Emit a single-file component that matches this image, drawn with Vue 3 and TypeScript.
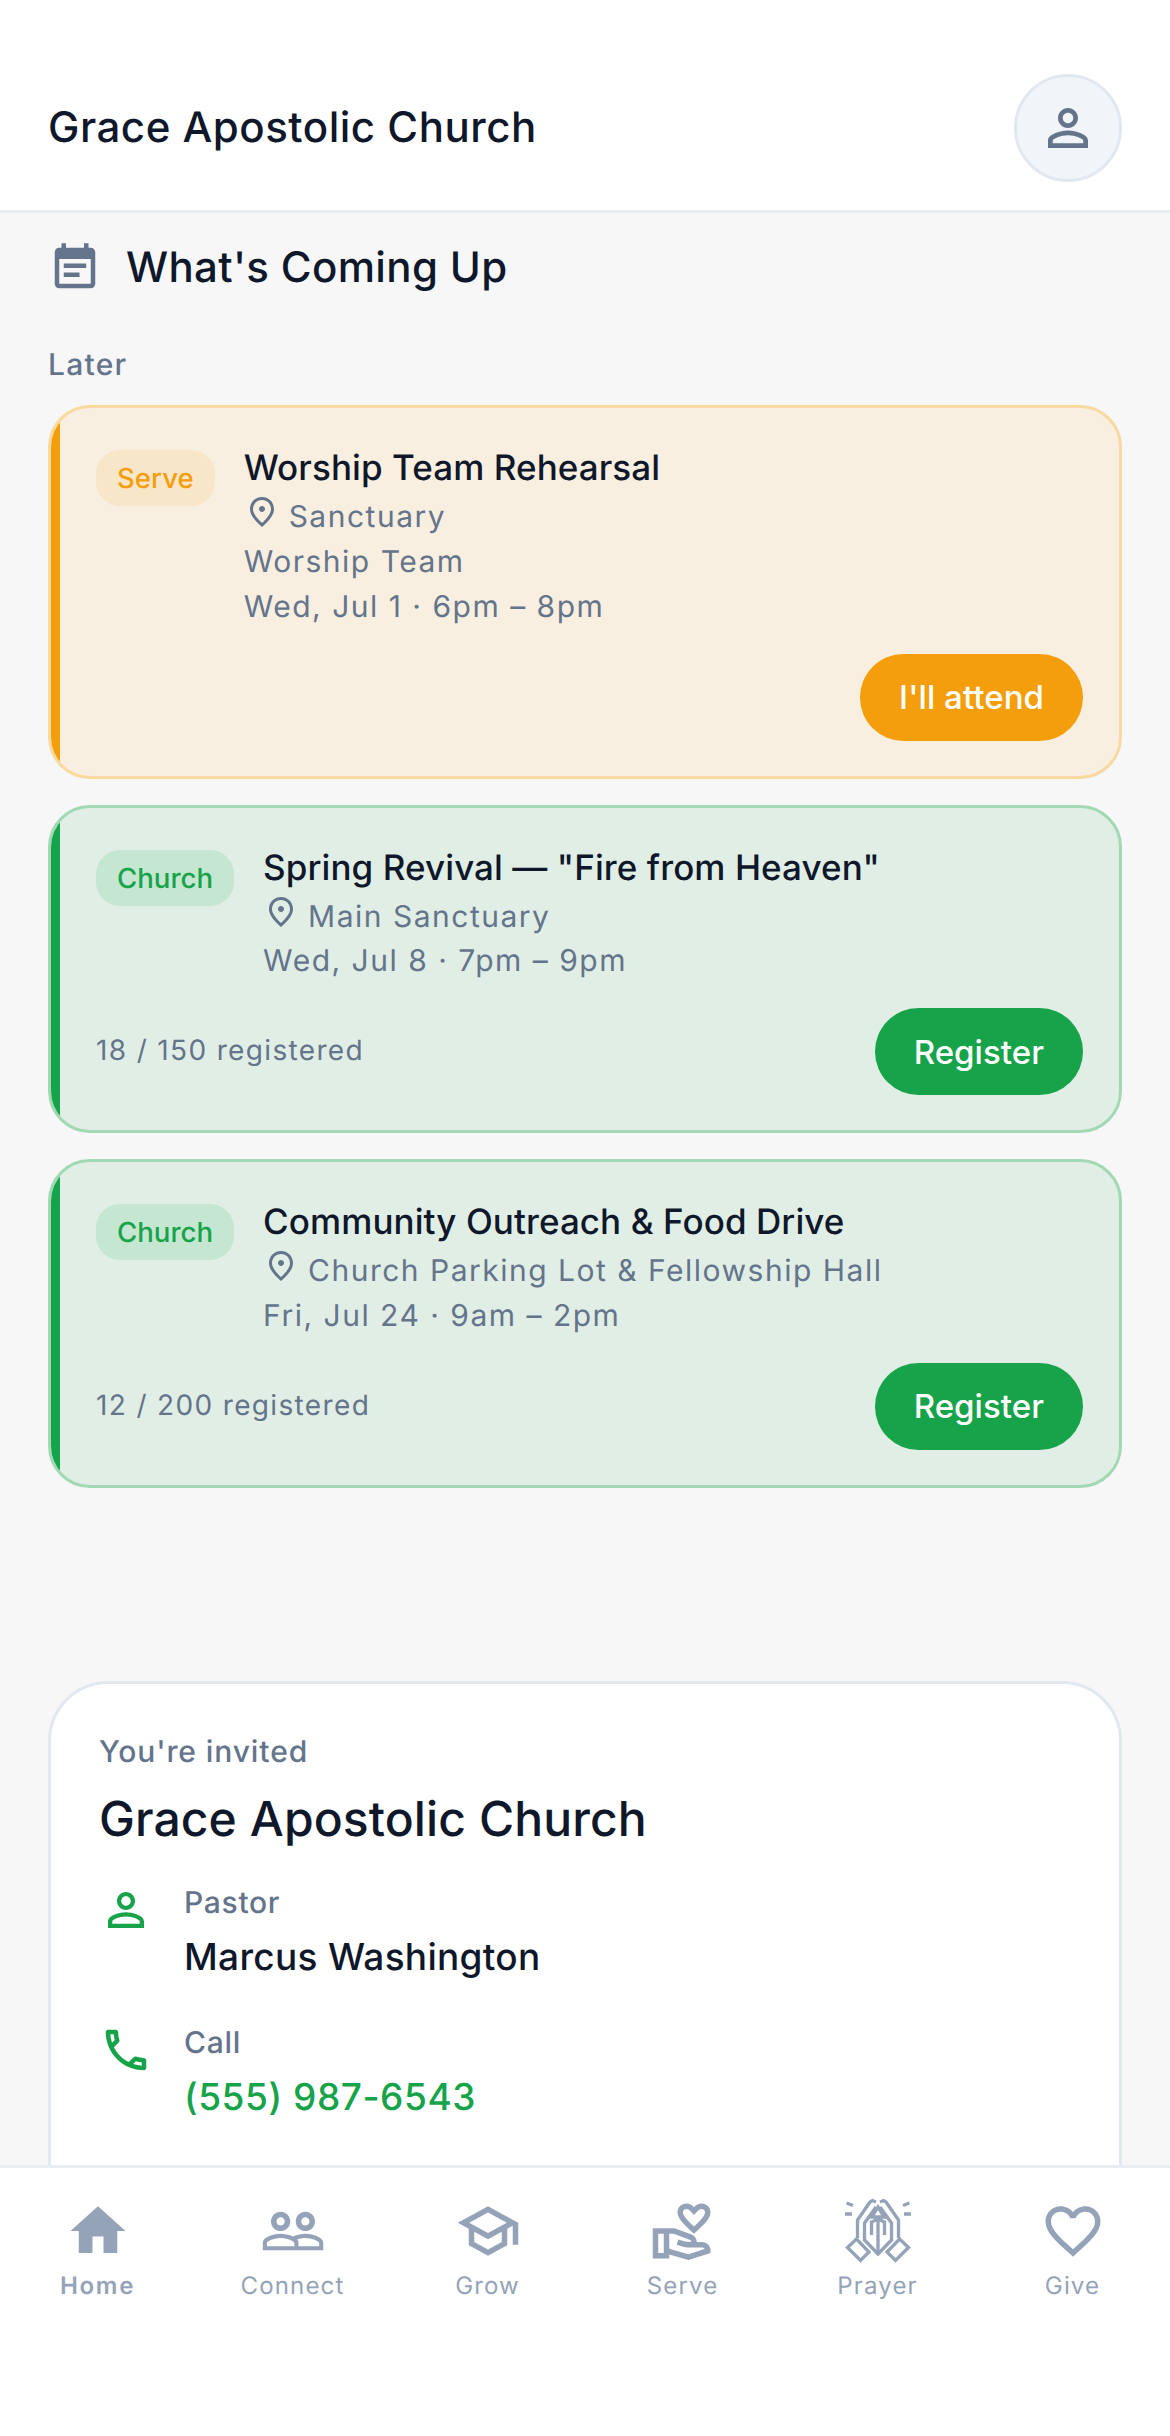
<script setup lang="ts">
interface EventItem {
  tone: string
  badge: string
  title: string
  place: string
  team?: string
  when: string
  count?: string
  action: string
}

const events: EventItem[] = [
  { tone: 'amber', badge: 'Serve', title: 'Worship Team Rehearsal', place: 'Sanctuary', team: 'Worship Team', when: 'Wed, Jul 1 · 6pm – 8pm', action: "I'll attend" },
  { tone: 'green', badge: 'Church', title: 'Spring Revival — "Fire from Heaven"', place: 'Main Sanctuary', when: 'Wed, Jul 8 · 7pm – 9pm', count: '18 / 150 registered', action: 'Register' },
  { tone: 'green', badge: 'Church', title: 'Community Outreach & Food Drive', place: 'Church Parking Lot & Fellowship Hall', when: 'Fri, Jul 24 · 9am – 2pm', count: '12 / 200 registered', action: 'Register' },
]

const person = 'M12 5.9c1.16 0 2.1.94 2.1 2.1s-.94 2.1-2.1 2.1S9.9 9.16 9.9 8s.94-2.1 2.1-2.1m0 9c2.97 0 6.1 1.46 6.1 2.1v1.1H5.9V17c0-.64 3.13-2.1 6.1-2.1M12 4C9.79 4 8 5.79 8 8s1.79 4 4 4 4-1.79 4-4-1.79-4-4-4zm0 9c-2.67 0-8 1.34-8 4v3h16v-3c0-2.66-5.33-4-8-4z'

const nav = [
  { label: 'Home', active: true, d: 'M10 20v-6h4v6h5v-8h3L12 3 2 12h3v8z' },
  { label: 'Connect', d: 'M16.5 13c-1.2 0-3.07.34-4.5 1-1.43-.67-3.3-1-4.5-1C5.33 13 1 14.08 1 16.25V19h22v-2.75c0-2.17-4.33-3.25-6.5-3.25zm-4 4.5h-10v-1.25c0-.54 2.56-1.75 5-1.75s5 1.21 5 1.75v1.25zm9 0H14v-1.25c0-.46-.2-.86-.52-1.22.88-.3 1.96-.53 3.02-.53 2.44 0 5 1.21 5 1.75v1.25zM7.5 12c1.93 0 3.5-1.57 3.5-3.5S9.43 5 7.5 5 4 6.57 4 8.5 5.57 12 7.5 12zm0-5c.83 0 1.5.67 1.5 1.5S8.33 10 7.5 10 6 9.33 6 8.5 6.67 7 7.5 7zm9 5c1.93 0 3.5-1.57 3.5-3.5S18.43 5 16.5 5 13 6.57 13 8.5s1.57 3.5 3.5 3.5zm0-5c.83 0 1.5.67 1.5 1.5s-.67 1.5-1.5 1.5-1.5-.67-1.5-1.5.67-1.5 1.5-1.5z' },
  { label: 'Grow', d: 'M12 3L1 9l4 2.18v6L12 21l7-3.82v-6l2-1.09V17h2V9L12 3zm6.82 6L12 12.72 5.18 9 12 5.28 18.82 9zM17 15.99l-5 2.73-5-2.73v-3.72L12 15l5-2.73v3.72z' },
  { label: 'Serve', d: 'M16 13c3.09-2.81 6-5.45 6-7.75C22 3.37 20.52 2 18.75 2c-1 0-1.96.46-2.75 1.34C15.21 2.46 14.25 2 13.25 2 11.48 2 10 3.37 10 5.25c0 2.3 2.91 4.94 6 7.75zm-2.75-9c.44 0 .97.27 1.23.57L16 6.19l1.52-1.62c.26-.3.79-.57 1.23-.57.72 0 1.25.52 1.25 1.25 0 1.31-2.14 3.37-4 5.08-1.86-1.71-4-3.77-4-5.08 0-.73.53-1.25 1.25-1.25zM19 16h-2c0-1.2-.75-2.28-1.87-2.7L8.97 11H1v11h6v-1.44l7 1.94 8-2.5v-1c0-1.66-1.34-3-3-3zM3 20v-7h2v7H3zm10.97.41L7 18.48V13h1.61l5.82 2.17c.34.13.57.46.57.83 0 0-1.99-.05-2.3-.15l-2.38-.79-.63 1.9 2.38.79c.51.17 1.05.26 1.59.26H19c.39 0 .74.23.9.56l-5.93 1.85z' },
  { label: 'Prayer', d: '' },
  { label: 'Give', d: 'M16.5 3c-1.74 0-3.41.81-4.5 2.09C10.91 3.81 9.24 3 7.5 3 4.42 3 2 5.42 2 8.5c0 3.78 3.4 6.86 8.55 11.54L12 21.35l1.45-1.32C18.6 15.36 22 12.28 22 8.5 22 5.42 19.58 3 16.5 3zm-4.4 15.55l-.1.1-.1-.1C7.14 14.24 4 11.39 4 8.5 4 6.5 5.5 5 7.5 5c1.54 0 3.04.99 3.57 2.36h1.87C13.46 5.99 14.96 5 16.5 5c2 0 3.5 1.5 3.5 3.5 0 2.89-3.14 5.74-7.9 10.05z' },
]
</script>

<template>
  <div class="screen">
    <header class="topbar">
      <h1 class="brand">Grace Apostolic Church</h1>
      <button class="avatar" aria-label="Profile">
        <svg class="avatar-icon" viewBox="0 0 24 24"><path :d="person" /></svg>
      </button>
    </header>

    <main class="content">
      <section class="upcoming">
        <div class="section-head">
          <svg class="section-icon" viewBox="0 0 24 24"><path d="M17 10H7v2h10v-2zm2-7h-1V1h-2v2H8V1H6v2H5c-1.11 0-1.99.9-1.99 2L3 19c0 1.1.89 2 2 2h14c1.1 0 2-.9 2-2V5c0-1.1-.9-2-2-2zm0 16H5V8h14v11zm-5-5H7v2h7v-2z" /></svg>
          <h2 class="section-title">What's Coming Up</h2>
        </div>
        <div class="group-label">Later</div>
        <div class="cards">
          <article v-for="e in events" :key="e.title" class="card" :class="e.tone">
            <div class="card-top">
              <span class="badge">{{ e.badge }}</span>
              <div class="info">
                <div class="ev-title">{{ e.title }}</div>
                <div class="meta">
                  <svg class="pin" viewBox="0 0 24 24"><path d="M12 12c-1.1 0-2-.9-2-2s.9-2 2-2 2 .9 2 2-.9 2-2 2zm6-1.8C18 6.57 15.35 4 12 4s-6 2.57-6 6.2c0 2.34 1.95 5.44 6 9.14 4.05-3.7 6-6.8 6-9.14zM12 2c4.2 0 8 3.22 8 8.2 0 3.32-2.67 7.25-8 11.8-5.33-4.55-8-8.48-8-11.8C4 5.22 7.8 2 12 2z" /></svg>
                  {{ e.place }}
                </div>
                <div v-if="e.team" class="meta">{{ e.team }}</div>
                <div class="meta">{{ e.when }}</div>
              </div>
            </div>
            <div class="card-foot">
              <span class="count">{{ e.count }}</span>
              <button class="action">{{ e.action }}</button>
            </div>
          </article>
        </div>
      </section>

      <section class="invite">
        <div class="invite-kicker">You're invited</div>
        <h2 class="invite-title">Grace Apostolic Church</h2>
        <div class="contact">
          <svg class="contact-icon" viewBox="0 0 24 24"><path :d="person" /></svg>
          <div>
            <div class="contact-label">Pastor</div>
            <div class="contact-value">Marcus Washington</div>
          </div>
        </div>
        <div class="contact">
          <svg class="contact-icon" viewBox="0 0 24 24"><path d="M6.54 5c.06.89.21 1.76.45 2.59l-1.2 1.2c-.41-1.2-.67-2.47-.76-3.79h1.51m9.86 12.02c.85.24 1.72.39 2.6.45v1.49c-1.32-.09-2.59-.35-3.8-.75l1.2-1.19M7.5 3H4c-.55 0-1 .45-1 1 0 9.39 7.61 17 17 17 .55 0 1-.45 1-1v-3.49c0-.55-.45-1-1-1-1.24 0-2.45-.2-3.57-.57-.1-.04-.21-.05-.31-.05-.26 0-.51.1-.71.29l-2.2 2.2c-2.83-1.45-5.15-3.76-6.59-6.59l2.2-2.2c.28-.28.36-.67.25-1.02C8.7 6.45 8.5 5.25 8.5 4c0-.55-.45-1-1-1z" /></svg>
          <div>
            <div class="contact-label">Call</div>
            <div class="contact-value link">(555) 987-6543</div>
          </div>
        </div>
      </section>
    </main>

    <nav class="tabbar">
      <div v-for="n in nav" :key="n.label" class="tab" :class="{ active: n.active }">
        <svg v-if="n.d" class="tab-icon" viewBox="0 0 24 24"><path :d="n.d" /></svg>
        <svg v-else class="tab-icon prayer" viewBox="9.5 8 66 66">
          <path d="M40.5 12 L37 10.5 L34.5 12 L22 30 L22 48 M40.5 17 L29 33 L29 50 L42.5 64 L56 50 L56 33 L44.5 17 M44.5 12 L48 10.5 L50.5 12 L63 30 L63 48" />
          <path d="M42.5 17 L36.5 27 H48.5 Z M36 45 V32 L42.5 29 L49 32 V45 M42.5 29 V64" />
          <path d="M21 49 L12 57.5 L25 70.5 L33.5 62 Z M64 49 L73 57.5 L60 70.5 L51.5 62 Z" />
          <path d="M9.5 24 H16.5 M11 13 L17.5 15.5 M68.5 24 H75.5 M74 13 L67.5 15.5" />
        </svg>
        <span class="tab-label">{{ n.label }}</span>
      </div>
    </nav>
  </div>
</template>

<style>
html, body { margin: 0; background: #f7f7f8; }
</style>

<style scoped>
.screen {
  width: 1170px;
  height: 2436px;
  display: flex;
  flex-direction: column;
  overflow: hidden;
  background: #f7f7f8;
  font-family: Inter, "Liberation Sans", sans-serif;
  font-optical-sizing: none;
  text-rendering: geometricPrecision;
  color: #0f172a;
}
h1, h2 { margin: 0; font-weight: 500; }

.topbar {
  flex: none;
  height: 210px;
  padding: 0 48px;
  background: #fff;
  border-bottom: 3px solid #e8edf3;
  display: flex;
  align-items: flex-end;
  justify-content: space-between;
}
.brand {
  font-size: 42px;
  line-height: 60px;
  margin-bottom: 52px;
  letter-spacing: 0.52px;
}
.avatar {
  width: 108px;
  height: 108px;
  padding: 0;
  border-radius: 50%;
  background: #f1f5f9;
  border: 3px solid #e2e8f0;
  display: flex;
  align-items: center;
  justify-content: center;
  margin-bottom: 28px;
}
.avatar-icon { width: 60px; height: 60px; fill: #64748b; }

.content {
  flex: 1;
  min-height: 0;
  overflow: hidden;
  padding: 0 48px;
}
.section-head {
  display: flex;
  align-items: center;
  gap: 24px;
  height: 54px;
  margin-top: 28px;
}
.section-icon { width: 54px; height: 54px; fill: #64748b; flex: none; }
.section-title { font-size: 42px; line-height: 54px; letter-spacing: 0.35px; }

.group-label {
  margin-top: 50px;
  font-size: 30px;
  line-height: 40px;
  color: #64748b;
  font-weight: 500;
  letter-spacing: 1.25px;
}
.cards {
  margin-top: 20px;
  display: flex;
  flex-direction: column;
  gap: 26px;
}
.card {
  position: relative;
  overflow: hidden;
  border-radius: 42px;
  border: 3px solid;
  padding: 42px 36px 35px 45px;
}
.card::before {
  content: "";
  position: absolute;
  left: 0;
  top: 0;
  bottom: 0;
  width: 9px;
}
.card.amber { background: #f8efe0; border-color: #f8d99f; }
.card.amber::before { background: #f59e0b; }
.card.green { background: #e1eee5; border-color: #a2d9b4; }
.card.green::before { background: #16a34a; }

.card-top { display: flex; align-items: flex-start; gap: 29px; }
.badge {
  flex: none;
  height: 56px;
  line-height: 56px;
  padding: 0 21px;
  border-radius: 24px;
  font-size: 27.6px;
  font-weight: 500;
}
.amber .badge { background: #f8e6c9; color: #f59e0b; }
.green .badge { background: #c5e6d1; color: #16a34a; }

.ev-title {
  font-size: 35px;
  line-height: 36px;
  font-weight: 500;
  margin-bottom: 8px;
  letter-spacing: 0.08px;
}
.meta {
  font-size: 30px;
  line-height: 45px;
  color: #64748b;
  letter-spacing: 1.5px;
}
.pin {
  width: 36px;
  height: 36px;
  fill: #64748b;
  vertical-align: -3.5px;
  margin-right: -1px;
}
.card-foot {
  margin-top: 24px;
  display: flex;
  align-items: center;
  justify-content: space-between;
}
.count {
  font-size: 28px;
  color: #64748b;
  letter-spacing: 1.35px;
  margin-bottom: 3px;
}
.action {
  height: 87px;
  padding: 0 39px;
  border: 0;
  border-radius: 44px;
  color: #fff;
  font-family: inherit;
  font-size: 33px;
  font-weight: 500;
  letter-spacing: 0.05px;
}
.amber .action { background: #f59e0b; }
.green .action { background: #16a34a; }

.invite {
  margin-top: 193px;
  box-sizing: border-box;
  height: 600px;
  background: #fff;
  border: 3px solid #e2e8f0;
  border-radius: 60px;
  padding: 48px 48px;
}
.invite-kicker {
  font-size: 30px;
  line-height: 40px;
  color: #64748b;
  font-weight: 500;
  letter-spacing: 0.9px;
}
.invite-title {
  font-size: 48px;
  line-height: 60px;
  margin-top: 17px;
  letter-spacing: 0.1px;
}
.contact {
  display: flex;
  align-items: flex-start;
  gap: 31px;
  margin-top: 34.5px;
}
.contact + .contact { margin-top: 41.5px; }
.contact-icon { width: 54px; height: 54px; fill: #16a34a; flex: none; }
.contact-label {
  font-size: 30px;
  line-height: 40px;
  color: #64748b;
  font-weight: 500;
  letter-spacing: 0.7px;
}
.contact-value {
  font-size: 37px;
  line-height: 48px;
  margin-top: 10px;
  font-weight: 500;
  letter-spacing: 0.3px;
}
.contact-value.link { color: #16a34a; letter-spacing: 0.55px; }

.tabbar {
  flex: none;
  height: 271px;
  box-sizing: border-box;
  background: #fff;
  border-top: 3px solid #e8edf3;
  display: grid;
  grid-template-columns: repeat(6, 195px);
  padding-top: 30px;
  align-content: start;
}
.tab {
  display: flex;
  flex-direction: column;
  align-items: center;
  color: #94a3b8;
}
.tab-icon { width: 66px; height: 66px; fill: #94a3b8; overflow: visible; }
.tab-icon.prayer { fill: none; stroke: #94a3b8; stroke-width: 3.3; }
.tab-label {
  font-size: 24px;
  line-height: 36px;
  margin-top: 3.5px;
  letter-spacing: 1.15px;
}
.tab.active .tab-label { font-weight: 600; letter-spacing: 1.7px; }
</style>
